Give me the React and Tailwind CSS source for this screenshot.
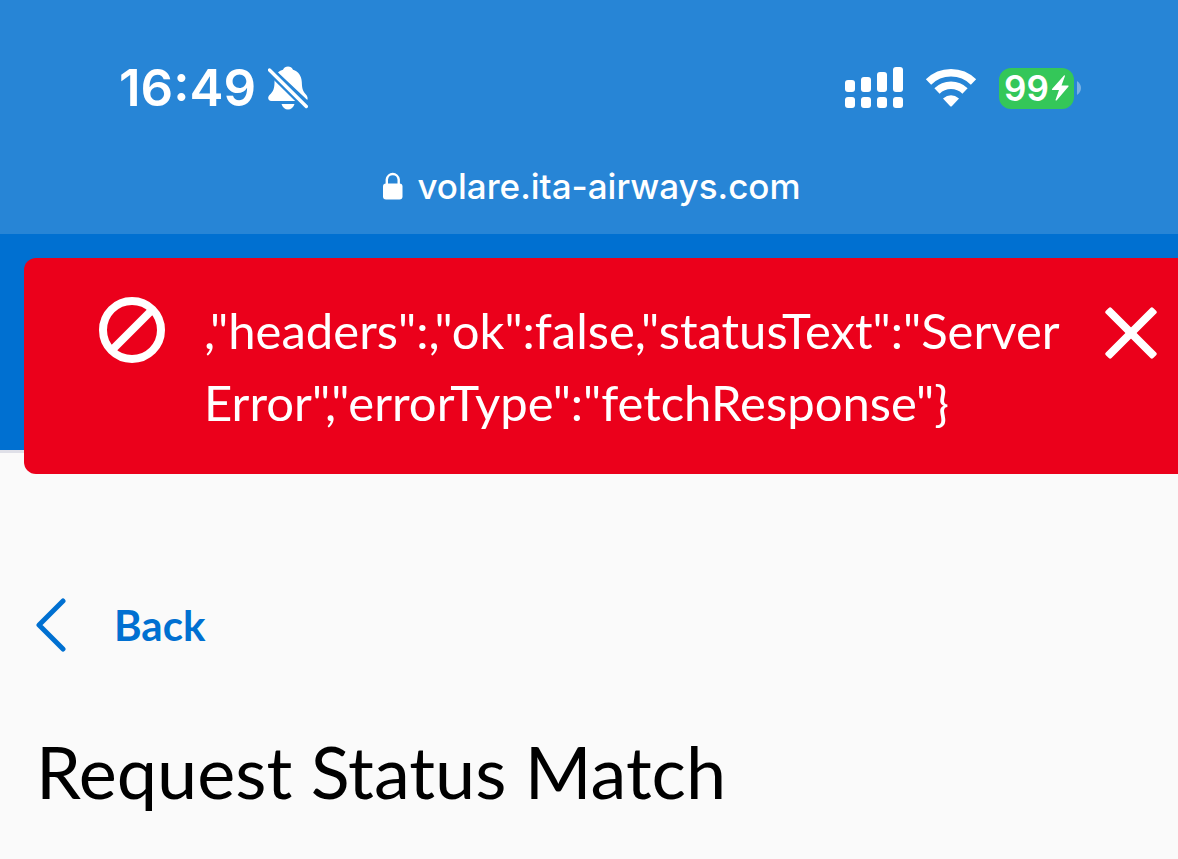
import React from 'react';

const BellOffIcon = () => (
  <svg viewBox="0 0 40 44" className="w-10 h-11" fill="white" aria-hidden="true">
    <path d="M10 6.5 C11.5 5 13 4.300 15 3.800 C16 1.500 17.800 0.500 20 0.500 C22.200 0.500 24 1.500 25 3.800 C30.500 5.500 33.500 10 33.800 16 C34 22 34.500 24.500 37.500 28 C39.500 30 40 32 39.300 34 Z" />
    <path d="M6.500 11.500 L30 35 L3.500 35 C-0.500 35 -0.500 31 1.500 29 C5.500 25.500 6.500 22 6.500 16 Z" />
    <path d="M13.500 38 L26.500 38 C25.500 41.500 23 43.500 20 43.500 C17 43.500 14.500 41.500 13.500 38 Z" />
    <path d="M1.500 4 L38.300 40.500" stroke="#2785d6" strokeWidth="8" />
    <path d="M1.500 4 L38.300 40.500" stroke="white" strokeWidth="3.400" strokeLinecap="round" />
  </svg>
);

const SignalIcon = () => (
  <svg viewBox="0 0 58 42" className="w-[58px] h-[42px]" fill="white" aria-hidden="true">
    <rect x="0" y="13" width="10" height="12" rx="3" />
    <rect x="16" y="10" width="10" height="15" rx="3" />
    <rect x="32" y="5" width="10" height="20" rx="3" />
    <rect x="48" y="0" width="10" height="25" rx="3" />
    <rect x="0" y="30" width="10" height="11" rx="3" />
    <rect x="16" y="30" width="10" height="11" rx="3" />
    <rect x="32" y="30" width="10" height="11" rx="3" />
    <rect x="48" y="30" width="10" height="11" rx="3" />
  </svg>
);

const WifiIcon = () => (
  <svg viewBox="0 0 52 38" className="w-[52px] h-[38px]" aria-hidden="true">
    <path d="M3.500 13 A32 32 0 0 1 48.500 13" fill="none" stroke="white" strokeWidth="7.500" />
    <path d="M12 22 A20 20 0 0 1 40 22" fill="none" stroke="white" strokeWidth="7.500" />
    <path d="M18 29.500 Q26 23 34 29.500 L27 37 Q26 38 25 37 Z" fill="white" />
  </svg>
);

const BatteryIcon = () => (
  <div className="flex items-center gap-[3px]">
    <div className="flex items-center justify-center gap-0.5 w-[75px] h-[41px] rounded-xl bg-[#34c759] text-white">
      <span className="text-[35px] leading-10 font-semibold">99</span>
      <svg viewBox="0 0 18 26" className="w-[18px] h-[26px]" fill="white" aria-hidden="true">
        <path d="M13 0.500 L1 14 Q0.500 15 1.500 15 L8 15 L4.500 25 Q5 26 6 25 L17.500 11.500 Q18 10.500 17 10.500 L10.500 10.500 L14 1 Q14 0 13 0.500 Z" />
      </svg>
    </div>
    <svg viewBox="0 0 4 14" className="w-1 h-3.5" aria-hidden="true">
      <path d="M0 0 Q4 3 4 7 Q4 11 0 14 Z" fill="#79b2e5" />
    </svg>
  </div>
);

const LockIcon = () => (
  <svg viewBox="0 0 20 28" className="w-5 h-7" aria-hidden="true">
    <rect x="0" y="11.500" width="19.500" height="16" rx="3" fill="white" />
    <path d="M3.800 13 V7.500 A6 6.300 0 0 1 15.700 7.500 V13" fill="none" stroke="white" strokeWidth="2.400" />
  </svg>
);

const BrowserHeader = () => (
  <header className="h-[234px] bg-[#2785d6] text-white font-['Inter',sans-serif]">
    <div className="flex items-center justify-between pt-[60px] pl-[119px] pr-[97px]">
      <div className="flex items-center gap-3">
        <span className="text-[51px] leading-14 font-semibold">16:49</span>
        <BellOffIcon />
      </div>
      <div className="flex items-center gap-[22px]">
        <SignalIcon />
        <WifiIcon />
        <BatteryIcon />
      </div>
    </div>
    <div className="flex items-center justify-center gap-3.5 mt-[46px] pl-1.5">
      <LockIcon />
      <span className="text-[35px] leading-12 font-medium">volare.ita-airways.com</span>
    </div>
  </header>
);

const ErrorAlert = ({ message }) => (
  <div
    role="alert"
    className="absolute top-6 left-6 right-0 flex items-start rounded-l-xl bg-[#eb001b] py-9 pl-[75px] pr-[21px] text-white"
  >
    <svg viewBox="0 0 66 66" className="w-[66px] h-[66px] mt-[3px] shrink-0" fill="none" stroke="white" strokeWidth="8" aria-hidden="true">
      <circle cx="33" cy="33" r="29" />
      <path d="M12.500 53.500 L53.500 12.500" />
    </svg>
    <p className="flex-1 ml-[39px] mr-6 text-[49px] leading-[72px]">{message}</p>
    <button type="button" aria-label="Close" className="mt-[13px] shrink-0">
      <svg viewBox="0 0 52 52" className="block w-[52px] h-[52px]" fill="white" aria-hidden="true">
        <rect x="-7.500" y="22" width="67" height="8" rx="2" transform="rotate(45 26 26)" />
        <rect x="-7.500" y="22" width="67" height="8" rx="2" transform="rotate(-45 26 26)" />
      </svg>
    </button>
  </div>
);

export default function App() {
  return (
    <div className="min-h-screen bg-[#fafafa] font-['Lato',sans-serif]">
      <BrowserHeader />
      <div className="relative h-[219px] bg-[#0070d1] border-b-3 border-[#dfe0e8]">
        <ErrorAlert message={',"headers":,"ok":false,"statusText":"Server Error","errorType":"fetchResponse"}'} />
      </div>
      <main className="px-9 pt-[136px]">
        <a href="#back" className="inline-flex items-center gap-12 text-[#0070d1]">
          <svg viewBox="0 0 30 54" className="w-[30px] h-[54px]" fill="none" stroke="currentColor" strokeWidth="5" strokeLinecap="round" strokeLinejoin="round" aria-hidden="true">
            <path d="M27 3 L3 27 L27 51" />
          </svg>
          <span className="text-[42px] leading-[72px] font-bold">Back</span>
        </a>
        <h1 className="mt-[66px] text-[72px] leading-[88px] text-black">Request Status Match</h1>
      </main>
    </div>
  );
}
